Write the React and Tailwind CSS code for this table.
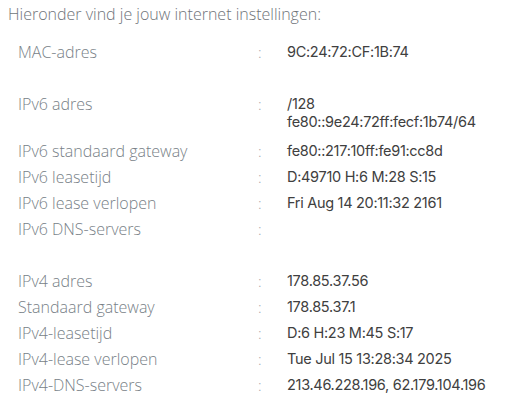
import React from "react";

const rows = [
  { l: "MAC-adres", v: ["9C:24:72:CF:1B:74"] },
  { gap: true },
  { l: "IPv6 adres", v: ["/128", "fe80::9e24:72ff:fecf:1b74/64"], tall: true },
  { l: "IPv6 standaard gateway", v: ["fe80::217:10ff:fe91:cc8d"] },
  { l: "IPv6 leasetijd", v: ["D:49710 H:6 M:28 S:15"] },
  { l: "IPv6 lease verlopen", v: ["Fri Aug 14 20:11:32 2161"] },
  { l: "IPv6 DNS-servers", v: [""] },
  { gap: true },
  { l: "IPv4 adres", v: ["178.85.37.56"] },
  { l: "Standaard gateway", v: ["178.85.37.1"] },
  { l: "IPv4-leasetijd", v: ["D:6 H:23 M:45 S:17"] },
  { l: "IPv4-lease verlopen", v: ["Tue Jul 15 13:28:34 2025"] },
  { l: "IPv4-DNS-servers", v: ["213.46.228.196, 62.179.104.196"] },
];

export default function App() {
  return (
    <div className="w-[526px] h-[418px] bg-white overflow-hidden font-['Open_Sans',sans-serif]">
      <div className="pl-[8px] pt-[4px] text-[16px] leading-[20px] font-light text-[#6f747a]">
        Hieronder vind je jouw internet instellingen:
      </div>
      <div className="flex flex-col pt-[19px]">
        {rows.map((r, i) =>
          r.gap ? (
            <div key={i} className="h-[26px]" />
          ) : (
            <div
              key={i}
              className={`flex items-start pl-[18px] ${r.tall ? "h-[47px]" : "h-[26px]"}`}
            >
              <div className="w-[240px] text-[16px] leading-[18px] font-light text-[#787f87]">
                {r.l}
              </div>
              <div className="w-[29px] text-[15px] leading-[18px] font-light text-[#a0a4a8]">:</div>
              <div className="flex flex-col font-['Inter',sans-serif] proportional-nums text-[14.5px] leading-[18px] tracking-[-0.3px] text-[#404040]">
                {r.v.map((t, j) => (
                  <span key={j}>{t}</span>
                ))}
              </div>
            </div>
          )
        )}
      </div>
    </div>
  );
}
